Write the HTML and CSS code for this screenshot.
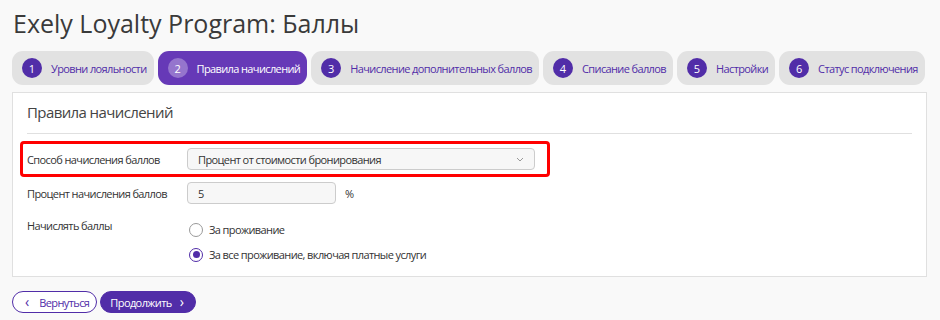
FILE: index.html
```html
<!DOCTYPE html>
<html lang="ru">
<head>
    <meta charset="UTF-8">
    <title>Exely Loyalty Program: Баллы</title>
    <link rel="stylesheet" href="styles.css">
</head>
<body>
    <h1 class="page-title">Exely Loyalty Program: Баллы</h1>

    <!-- Шаги мастера -->
    <nav class="steps">
        <a class="step"><span class="step-num">1</span>Уровни лояльности</a>
        <a class="step active"><span class="step-num">2</span>Правила начислений</a>
        <a class="step"><span class="step-num">3</span>Начисление дополнительных баллов</a>
        <a class="step"><span class="step-num">4</span>Списание баллов</a>
        <a class="step"><span class="step-num">5</span>Настройки</a>
        <a class="step"><span class="step-num">6</span>Статус подключения</a>
    </nav>

    <div class="panel">
        <h2 class="panel-title">Правила начислений</h2>

        <div class="row row-marked">
            <label class="row-label">Способ начисления баллов</label>
            <div class="select">
                <span>Процент от стоимости бронирования</span>
                <svg class="select-arrow" width="8" height="5" viewBox="0 0 8 5"><path d="M1 1l3 3 3-3" fill="none" stroke="#999" stroke-width="1"/></svg>
            </div>
        </div>

        <div class="row">
            <label class="row-label">Процент начисления баллов</label>
            <div class="input">5</div>
            <span class="unit">%</span>
        </div>

        <div class="row row-radios">
            <label class="row-label">Начислять баллы</label>
            <div class="radios">
                <div class="radio"><span class="radio-dot"></span>За проживание</div>
                <div class="radio checked"><span class="radio-dot"></span>За все проживание, включая платные услуги</div>
            </div>
        </div>
    </div>

    <div class="actions">
        <button class="btn btn-back"><span class="chev">‹</span>Вернуться</button>
        <button class="btn btn-next">Продолжить<span class="chev">›</span></button>
    </div>
</body>
</html>
```

FILE: styles.css
```css
body {
    margin: 0;
    padding: 6px 12px 0 12px;
    background: #f9f9f9;
    font-family: "Open Sans", sans-serif;
    color: #333;
}

.page-title {
    margin: 0 0 11px 1px;
    font-size: 25px;
    font-weight: 400;
    line-height: 34px;
    color: #3a3a3a;
}

.steps {
    display: flex;
    gap: 4px;
}

.step {
    display: flex;
    align-items: center;
    height: 34px;
    padding: 0 7px 0 10px;
    background: #e2e2e2;
    border-radius: 11px;
    font-size: 11px;
    letter-spacing: -0.62px;
    color: #512da8;
    white-space: nowrap;
}

.step-num {
    display: inline-flex;
    align-items: center;
    justify-content: center;
    width: 20px;
    height: 20px;
    margin-right: 9px;
    border-radius: 50%;
    background: #512da8;
    color: #fff;
    font-size: 11px;
    letter-spacing: 0;
}

.step.active {
    background: #6639b7;
    color: #fff;
}

.step.active .step-num {
    background: #9575cd;
}

.panel {
    margin-top: 7px;
    width: 915px;
    box-sizing: border-box;
    height: 185px;
    padding: 8px 14px 0 14px;
    background: #fff;
    border: 1px solid #e0e0e0;
}

.panel-title {
    margin: 0;
    padding-bottom: 10px;
    border-bottom: 1px solid #e0e0e0;
    font-size: 15px;
    font-weight: 400;
    letter-spacing: -0.6px;
    line-height: 22px;
    color: #444;
}

.row {
    display: flex;
    align-items: center;
    font-size: 11px;
    letter-spacing: -0.6px;
}

.row-label {
    flex-shrink: 0;
    width: 160px;
    white-space: nowrap;
    color: #333;
}

.row-marked {
    margin: 7px 0 0 -7px;
    padding: 4px;
    width: 516px;
    border: 3px solid #f00;
    border-radius: 4px;
}

.select {
    display: flex;
    align-items: center;
    justify-content: space-between;
    width: 348px;
    height: 22px;
    box-sizing: border-box;
    padding: 0 10px;
    background: #f7f7f7;
    border: 1px solid #ccc;
    border-radius: 4px;
    color: #333;
}

.input {
    width: 149px;
    height: 22px;
    box-sizing: border-box;
    padding: 3px 10px;
    background: #f7f7f7;
    border: 1px solid #ccc;
    border-radius: 4px;
}

.unit {
    margin-left: 9px;
}

.row-marked + .row {
    margin-top: 5px;
}

.row-radios {
    align-items: flex-start;
    margin-top: 14px;
}

.radios {
    display: flex;
    flex-direction: column;
    gap: 10px;
    padding-top: 4px;
}

.radio {
    display: flex;
    align-items: center;
    height: 15px;
    color: #333;
}

.radio-dot {
    width: 12px;
    height: 12px;
    margin: 0 6px 0 2px;
    border: 1px solid #999;
    border-radius: 50%;
    position: relative;
}

.radio.checked .radio-dot {
    border-color: #512da8;
}

.radio.checked .radio-dot::after {
    content: '';
    position: absolute;
    top: 2.5px;
    left: 2.5px;
    width: 7px;
    height: 7px;
    border-radius: 50%;
    background: #512da8;
}

.actions {
    display: flex;
    gap: 3px;
    margin-top: 14px;
}

.btn {
    display: flex;
    align-items: center;
    height: 22px;
    box-sizing: border-box;
    border-radius: 11px;
    font-family: "Open Sans", sans-serif;
    font-size: 11px;
    letter-spacing: -0.6px;
    white-space: nowrap;
    cursor: pointer;
}

.btn-back {
    padding: 0 7px 0 12px;
    background: #fff;
    border: 1px solid #512da8;
    color: #512da8;
}

.btn-back .chev {
    margin-right: 10px;
}

.btn-next {
    padding: 0 11px 0 9px;
    background: #512da8;
    border: 1px solid #512da8;
    color: #fff;
}

.btn-next .chev {
    margin-left: 8px;
}

.chev {
    font-size: 14px;
    line-height: 1;
    letter-spacing: 0;
}
```
